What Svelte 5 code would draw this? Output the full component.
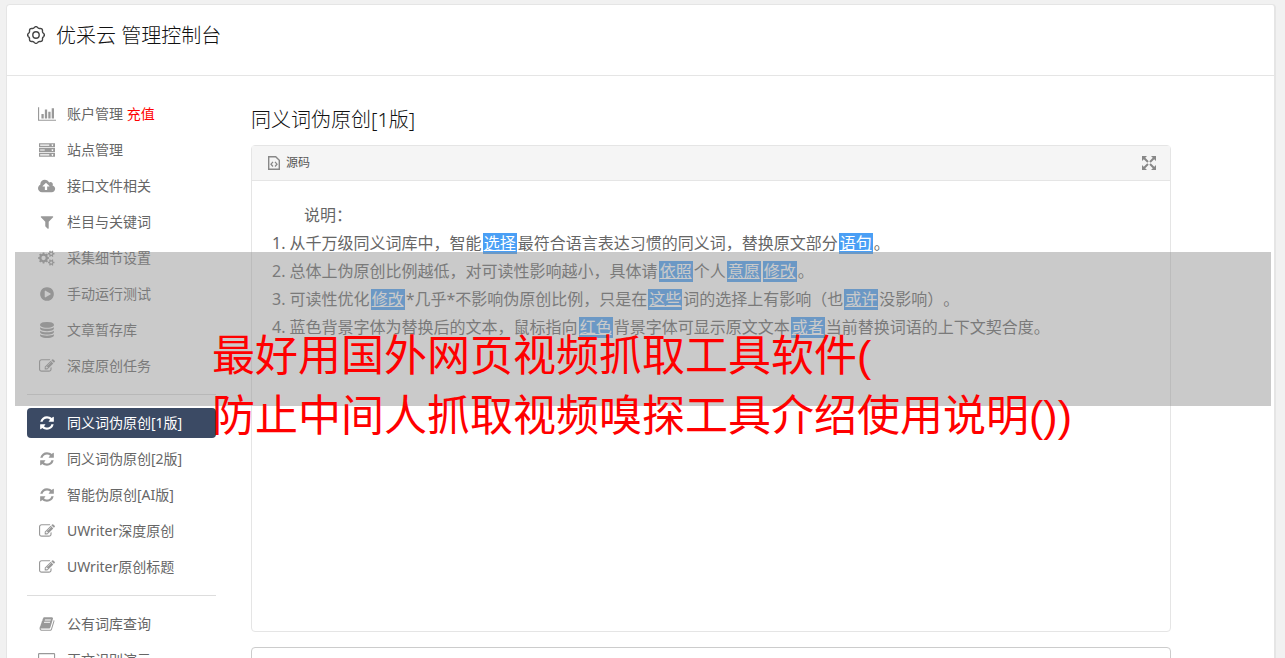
<script>
  const paths = {
    chart: 'M640 896v512h-256v-512h256zm384-512v1024h-256v-1024h256zm1024 1152v128h-2048v-1536h128v1408h1920zm-640-896v768h-256v-768h256zm384-384v1152h-256v-1152h256z',
    server: 'M0 128h1792v448h-1792zM128 288v128h1024v-128zM1504 256a96 96 0 1 0 1 0zM0 672h1792v448h-1792zM128 832v128h512v-128zM1504 800a96 96 0 1 0 1 0zM0 1216h1792v448h-1792zM128 1376v128h1024v-128zM1504 1344a96 96 0 1 0 1 0z',
    cloud: 'M1280 928q0-14-9-23l-352-352q-9-9-23-9t-23 9l-351 351q-10 12-10 24 0 14 9 23t23 9h224v352q0 13 9.5 22.5t22.5 9.5h192q13 0 22.5-9.5t9.5-22.5v-352h224q13 0 22.5-9.5t9.5-22.5zm640 288q0 159-112.5 271.5t-271.5 112.5h-1088q-185 0-316.5-131.5t-131.5-316.5q0-130 70-240t188-165q-2-30-2-43 0-212 150-362t362-150q156 0 285.5 87t188.5 231q71-62 166-62 106 0 181 75t75 181q0 76-41 138 130 31 213.5 135.5t83.5 238.5z',
    filter: 'M1595 295q17 41-14 70l-493 493v742q0 42-39 59-13 5-25 5-27 0-45-19l-256-256q-19-19-19-45v-486l-493-493q-31-29-14-70 17-39 59-39h1280q42 0 59 39z',
    cogs: gear(620, 896, 490, 620, 8, 240) + gear(1480, 420, 250, 370, 6, 125) + gear(1480, 1400, 250, 370, 6, 125),
    play: 'M896 128q209 0 385.5 103t279.5 279.5 103 385.5-103 385.5-279.5 279.5-385.5 103-385.5-103-279.5-279.5-103-385.5 103-385.5 279.5-279.5 385.5-103zm384 823q32-18 32-55t-32-55l-544-320q-31-19-64-1-32 19-32 56v640q0 37 32 56 16 8 32 8 17 0 32-9z',
    database: 'M896 768q237 0 443-43t325-127v170q0 69-103 128t-280 93.5-385 34.5-385-34.5-280-93.5-103-128v-170q119 84 325 127t443 43zm0 768q237 0 443-43t325-127v170q0 69-103 128t-280 93.5-385 34.5-385-34.5-280-93.5-103-128v-170q119 84 325 127t443 43zm0-384q237 0 443-43t325-127v170q0 69-103 128t-280 93.5-385 34.5-385-34.5-280-93.5-103-128v-170q119 84 325 127t443 43zm0-1152q208 0 385 34.5t280 93.5 103 128v128q0 69-103 128t-280 93.5-385 34.5-385-34.5-280-93.5-103-128v-128q0-69 103-128t280-93.5 385-34.5z',
    edit: 'M888 1184l116-116-152-152-116 116v56h96v96h56zm440-720q-16-16-33 1l-350 350q-17 17-1 33t33-1l350-350q17-17 1-33zm80 594v190q0 119-84.5 203.5t-203.5 84.5h-832q-119 0-203.5-84.5t-84.5-203.5v-832q0-119 84.5-203.5t203.5-84.5h832q63 0 117 25 15 7 18 23 3 17-9 29l-49 49q-14 14-32 8-23-6-45-6h-832q-66 0-113 47t-47 113v832q0 66 47 113t113 47h832q66 0 113-47t47-113v-126q0-13 9-22l64-64q15-15 35-7t20 29zm-96-738l288 288-672 672h-288v-288zm444 132l-92 92-288-288 92-92q28-28 68-28t68 28l152 152q28 28 28 68t-28 68z',
    refresh: 'M1639 1056q0 5-1 7-64 268-268 434.5t-478 166.5q-146 0-282.5-55t-243.5-157l-129 129q-19 19-45 19t-45-19-19-45v-448q0-26 19-45t45-19h448q26 0 45 19t19 45-19 45l-137 137q71 66 161 102t187 36q134 0 250-65t186-179q11-17 53-117 8-23 30-23h192q13 0 22.5 9.5t9.5 22.5zm25-800v448q0 26-19 45t-45 19h-448q-26 0-45-19t-19-45 19-45l138-138q-148-137-349-137-134 0-250 65t-186 179q-11 17-53 117-8 23-30 23h-199q-13 0-22.5-9.5t-9.5-22.5v-7q65-268 270-434.5t480-166.5q146 0 284 55.5t245 156.5l130-129q19-19 45-19t45 19 19 45z',
    book: 'M1703 478q40 57 18 129l-275 906q-19 64-76.5 107.5t-122.5 43.5h-923q-77 0-148.5-53.5t-99.5-131.5q-24-67-2-127 0-4 3-27t4-37q1-8-3-21.5t-3-19.5q2-11 8-21t16.5-23.5 16.5-23.5q23-38 45-91.5t30-91.5q3-10 .5-30t-.5-28q3-11 17-28t17-23q21-36 42-92t25-90q1-9-2.5-32t.5-28q4-13 22-30.5t22-22.5q19-26 42.5-84.5t27.5-96.5q1-8-3-25.5t-2-26.5q2-8 9-18t18-23 17-21q8-12 16.5-30.5t15-35 16-36 19.5-32 26.5-23.5 36-11.5 47.5 5.5l-1 3q38-9 51-9h761q74 0 114 56t18 130l-274 906q-36 119-71.5 153.5t-128.5 34.5h-869q-27 0-38 15-11 16-1 43 24 70 144 70h923q29 0 56-15.5t35-41.5l300-987q7-22 5-57 38 15 59 43zm-1064 2q-4 13 2 22.5t20 9.5h608q13 0 25.5-9.5t16.5-22.5l21-64q4-13-2-22.5t-20-9.5h-608q-13 0-25.5 9.5t-16.5 22.5zm-83 256q-4 13 2 22.5t20 9.5h608q13 0 25.5-9.5t16.5-22.5l21-64q4-13-2-22.5t-20-9.5h-608q-13 0-25.5 9.5t-16.5 22.5z',
    desktop: 'M0 250q0-130 130-130h1660q130 0 130 130v1080q0 130-130 130h-550v130h100v100h-760v-100h100v-130h-550q-130 0-130-130zM128 248v960h1664v-960z',
  };

  // icons wider than the usual 1792 box
  const boxWidth = { chart: 2048, cloud: 1920, cogs: 1920, desktop: 1920 };

  const groups = [
    [
      { icon: 'chart', label: '账户管理', extra: '充值' },
      { icon: 'server', label: '站点管理' },
      { icon: 'cloud', label: '接口文件相关' },
      { icon: 'filter', label: '栏目与关键词' },
      { icon: 'cogs', label: '采集细节设置' },
      { icon: 'play', label: '手动运行测试' },
      { icon: 'database', label: '文章暂存库' },
      { icon: 'edit', label: '深度原创任务' },
    ],
    [
      { icon: 'refresh', label: '同义词伪原创[1版]' },
      { icon: 'refresh', label: '同义词伪原创[2版]' },
      { icon: 'refresh', label: '智能伪原创[AI版]' },
      { icon: 'edit', label: 'UWriter深度原创' },
      { icon: 'edit', label: 'UWriter原创标题' },
    ],
    [
      { icon: 'book', label: '公有词库查询' },
      { icon: 'desktop', label: '正文识别演示' },
    ],
  ];

  let active = $state('同义词伪原创[1版]');

  // odd parts are the replaced words
  const lines = [
    ['从千万级同义词库中，智能', '选择', '最符合语言表达习惯的同义词，替换原文部分', '语句', '。'],
    ['总体上伪原创比例越低，对可读性影响越小，具体请', '依照', '个人', '意愿', '', '修改', '。'],
    ['可读性优化', '修改', '*几乎*不影响伪原创比例，只是在', '这些', '词的选择上有影响（也', '或许', '没影响）。'],
    ['蓝色背景字体为替换后的文本，鼠标指向', '红色', '背景字体可显示原文文本', '或者', '当前替换词语的上下文契合度。'],
  ];

  function gear(cx, cy, inner, outer, teeth, hole) {
    const pts = [];
    for (let i = 0; i < teeth; i++) {
      for (const [r, f] of [[inner, -0.28], [outer, -0.2], [outer, 0.2], [inner, 0.28]]) {
        const a = ((i + f) / teeth) * Math.PI * 2;
        pts.push(`${Math.round(cx + r * Math.cos(a))} ${Math.round(cy + r * Math.sin(a))}`);
      }
    }
    return `M${pts.join('L')}zM${cx - hole} ${cy}a${hole} ${hole} 0 1 0 ${hole * 2} 0a${hole} ${hole} 0 1 0 ${-hole * 2} 0z`;
  }

  // scalloped outline of the header cog
  function scallop(teeth) {
    const pts = [];
    for (let i = 0; i < 144; i++) {
      const a = (i / 144) * Math.PI * 2;
      const r = 7.8 + 0.6 * Math.cos(a * teeth);
      pts.push(`${(9 + r * Math.sin(a)).toFixed(2)} ${(9 - r * Math.cos(a)).toFixed(2)}`);
    }
    return `M${pts.join('L')}z`;
  }
</script>

<div class="page">
  <div class="panel">
    <header>
      <svg width="18" height="18" viewBox="0 0 18 18" fill="none" stroke="#444" stroke-width="1.4">
        <path d={scallop(8)} />
        <circle cx="9" cy="9" r="3.2" />
      </svg>
      <h1>优采云 管理控制台</h1>
    </header>

    <div class="body">
      <nav>
        {#each groups as group}
          <ul>
            {#each group as item}
              <li>
                <a href="#top" class:active={item.label === active} onclick={() => (active = item.label)}>
                  <span class="icon">
                    <svg height="16" viewBox="0 0 {boxWidth[item.icon] ?? 1792} 1792" fill="currentColor" fill-rule="evenodd">
                      <path d={paths[item.icon]} />
                    </svg>
                  </span>
                  <span>{item.label} {#if item.extra}<em>{item.extra}</em>{/if}</span>
                </a>
              </li>
            {/each}
          </ul>
        {/each}
      </nav>

      <main>
        <h2>同义词伪原创[1版]</h2>
        <section class="editor">
          <div class="toolbar">
            <button class="source">
              <svg width="12" height="14" viewBox="0 0 12 14" fill="none" stroke="#888">
                <path d="M.7.7h7l3.6 3.6v9H.7z" stroke-width="1.4" />
                <path d="M5 5.8L3 8.2l2 2.3M7 5.8l2 2.4-2 2.3" stroke-width="1.3" />
              </svg>
              源码
            </button>
            <button class="expand" aria-label="全屏">
              <svg width="14" height="14" viewBox="0 0 14 14" fill="#888" stroke="#888" stroke-width="2">
                <path d="M2 2l4 4M12 2L8 6M2 12l4-4M12 12L8 8" />
                <path d="M0 0h5L0 5zM14 0v5L9 0zM0 14V9l5 5zM14 14H9l5-5z" stroke="none" />
              </svg>
            </button>
          </div>
          <div class="content">
            <p>说明：</p>
            {#each lines as line, n}
              <div>{n + 1}. {#each line as part, i}{#if i % 2}<u>{part}</u>{:else}{part}{/if}{/each}</div>
            {/each}
          </div>
        </section>
        <textarea aria-label="原文"></textarea>
      </main>
    </div>
  </div>

  <div class="banner">最好用国外网页视频抓取工具软件(<br />防止中间人抓取视频嗅探工具介绍使用说明())</div>
</div>

<style>
  :global(body) {
    margin: 0;
    background: #f1f1f1;
  }

  .page {
    position: relative;
    box-sizing: border-box;
    height: 100vh;
    overflow: hidden;
    padding: 4px 9px 0 6px;
    font-family: "Noto Sans", "Noto Sans CJK SC", sans-serif;
    color: #666;
    text-spacing-trim: space-all;
  }

  .panel {
    background: #fff;
    border: 1px solid #e5e5e5;
    border-right-width: 2px;
    border-radius: 4px;
  }

  header {
    display: flex;
    gap: 11px;
    padding: 21px 20px 29px;
    border-bottom: 1px solid #e5e5e5;
  }

  h1,
  h2 {
    margin: 0;
    font-size: 20px;
    line-height: 20px;
    font-weight: 300;
    color: #111;
  }

  .body {
    display: flex;
    gap: 35px;
    padding: 23px 103px 0 20px;
  }

  nav {
    flex: none;
    width: 189px;
  }

  ul {
    display: flex;
    flex-direction: column;
    gap: 6px;
    margin: 0;
    padding: 0;
    list-style: none;
  }

  ul + ul {
    margin-top: 13px;
    padding-top: 13px;
    border-top: 1px solid #ddd;
  }

  nav a {
    display: flex;
    align-items: center;
    height: 30px;
    border-radius: 4px;
    font-size: 14px;
    line-height: 20px;
    color: #666;
    text-decoration: none;
  }

  nav a.active {
    background: #3b4a64;
    color: #fff;
  }

  .icon {
    display: flex;
    justify-content: center;
    width: 40px;
    color: #999;
  }

  .active .icon {
    color: #fff;
  }

  em {
    font-style: normal;
    color: #f00;
  }

  main {
    flex: 1;
    min-width: 0;
    padding-top: 11px;
  }

  .editor {
    box-sizing: border-box;
    min-height: 487px;
    margin-top: 15px;
    border: 1px solid #e5e5e5;
    border-radius: 4px;
  }

  .toolbar {
    display: flex;
    justify-content: space-between;
    align-items: center;
    height: 34px;
    padding: 0 14px 0 16px;
    background: #f5f5f5;
    border-bottom: 1px solid #e5e5e5;
  }

  button {
    display: flex;
    align-items: center;
    gap: 6px;
    padding: 0;
    border: 0;
    background: none;
    font: inherit;
    font-size: 12px;
    line-height: 20px;
    color: #555;
  }

  .content {
    padding: 20px;
    font-size: 16px;
    line-height: 28px;
  }

  p {
    margin: 0;
    text-indent: 32px;
  }

  u {
    display: inline-block;
    margin: 0 1px;
    padding: 0 1px;
    line-height: 21px;
    background: #4a9ff5;
    color: #fff;
  }

  textarea {
    display: block;
    box-sizing: border-box;
    width: 100%;
    height: 120px;
    margin-top: 15px;
    border: 1px solid #ccc;
    border-radius: 4px;
    resize: none;
  }

  .banner {
    position: absolute;
    top: 252px;
    left: 15px;
    right: 14px;
    box-sizing: border-box;
    height: 154px;
    padding: 74px 0 0 197px;
    background: rgba(145, 145, 145, 0.48);
    font-family: "Liberation Sans", "Noto Sans CJK SC", sans-serif;
    font-size: 43px;
    line-height: 60px;
    white-space: nowrap;
    color: #f00;
  }
</style>
